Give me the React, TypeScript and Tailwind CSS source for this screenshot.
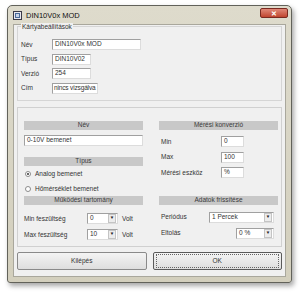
import React from 'react';

const font = { fontFamily: '"Liberation Sans", Arial, sans-serif' };

function Header({ children }: { children: React.ReactNode }) {
  return (
    <div className="h-[9px] bg-[#c8c8c8] flex items-center justify-center text-[6.5px] leading-none text-[#3a3a3a]">
      {children}
    </div>
  );
}

function TextBox({ value, w, tight }: { value: string; w: string; tight?: boolean }) {
  return (
    <div className={`${w} h-[11px] bg-white border border-[#a0a0a0] border-r-[#dcdcdc] border-b-[#dcdcdc] flex items-center ${tight ? 'px-[1px] tracking-[-0.15px]' : 'px-[2px]'} text-[6.5px] leading-none text-[#333] overflow-hidden whitespace-nowrap`}>
      {value}
    </div>
  );
}

function Combo({ value, w }: { value: string; w: string }) {
  return (
    <div className={`${w} h-[11px] bg-white border border-[#a0a0a0] border-r-[#dcdcdc] border-b-[#dcdcdc] flex items-center text-[6.5px] leading-none text-[#333]`}>
      <span className="flex-1 px-[2px] whitespace-nowrap">{value}</span>
      <span className="w-[8px] h-[9px] mr-[1px] bg-[#ececec] border border-[#c4c4c4] flex items-center justify-center text-[4.5px] text-[#222]">▼</span>
    </div>
  );
}

function Radio({ checked, label }: { checked?: boolean; label: string }) {
  return (
    <div className="flex items-center gap-[4px] h-[15px] pl-[1px] text-[6.5px] text-[#333]">
      <span className="w-[6px] h-[6px] rounded-full border border-[#8c8c8c] bg-white flex items-center justify-center">
        {checked && <span className="w-[2px] h-[2px] rounded-full bg-[#333]" />}
      </span>
      {label}
    </div>
  );
}

export default function App() {
  return (
    <div className="w-[302px] h-[292px] bg-white pl-[7px] pt-[5px]" style={font}>
      <div className="w-[285px] h-[278px] rounded-t-[5px] rounded-b-[3px] border border-[#62625a] bg-gradient-to-b from-[#dedbcc] to-[#d3cfbd] shadow-[2px_3px_5px_rgba(0,0,0,0.35)] flex flex-col px-[5px] pb-[5px]">
        {/* title bar */}
        <div className="h-[18px] flex items-start">
          <div className="mt-[5px] w-[9px] h-[9px] border border-[#3a3a48] bg-[#e8e8f0] mr-[4px] flex items-center justify-center">
            <div className="w-[5px] h-[5px] border border-[#4a6a9a] bg-[#c8d4e8]" />
          </div>
          <span className="mt-[5px] text-[7.5px] leading-[9px] text-[#111]">DIN10V0x MOD</span>
          <div className="flex-1" />
          <div className="mt-[2px] -mr-[2px] w-[28px] h-[10px] rounded-[2px] bg-gradient-to-b from-[#e08878] to-[#c0442e] border border-[#7a2a20] flex items-center justify-center text-white text-[7px] font-bold leading-none">
            ✕
          </div>
        </div>
        {/* client */}
        <div className="flex-1 bg-[#f0f0f0] border border-[#a9a79c] flex flex-col px-[3px] pt-[1px]">
          {/* group box */}
          <div className="relative border border-[#d5d5d5] h-[75px] pl-[3px] pt-[12px] flex flex-col gap-[3.5px]">
            <span className="absolute -top-[4px] left-[3px] bg-[#f0f0f0] px-[1px] text-[6.5px] leading-[8px] text-[#333]">Kártyabeállítások</span>
            {[
              ['Név', 'DIN10V0x MOD', 'w-[89px]'],
              ['Típus', 'DIN10V02', 'w-[39px]'],
              ['Verzió', '254', 'w-[39px]'],
              ['Cím', 'nincs vizsgálva', 'w-[46px]'],
            ].map(([l, v, w]) => (
              <div key={l} className="flex items-center h-[11px]">
                <span className="w-[31px] text-[6.5px] text-[#333]">{l}</span>
                <TextBox value={v} w={w} tight={l === 'Cím'} />
              </div>
            ))}
          </div>
          {/* main panel */}
          <div className="mt-[6px] border border-[#d0d0d0] h-[140px] grid grid-cols-[119px_119px] gap-[16px] pl-[6px] pt-[13px]">
            <div className="flex flex-col">
              <Header>Név</Header>
              <div className="mt-[5px]">
                <TextBox value="0-10V bemenet" w="w-full" />
              </div>
              <div className="mt-[11px]">
                <Header>Típus</Header>
              </div>
              <Radio checked label="Analog bemenet" />
              <Radio label="Hőmérséklet bemenet" />
              <Header>Működési tartomány</Header>
              <div className="mt-[8px] flex flex-col gap-[5px]">
                {[
                  ['Min feszültség', '0'],
                  ['Max feszültség', '10'],
                ].map(([l, v]) => (
                  <div key={l} className="flex items-center h-[11px] text-[6.5px] text-[#333]">
                    <span className="w-[63px]">{l}</span>
                    <Combo value={v} w="w-[31px]" />
                    <span className="ml-[4px]">Volt</span>
                  </div>
                ))}
              </div>
            </div>
            <div className="flex flex-col">
              <Header>Mérési konverzió</Header>
              <div className="mt-[6px] flex flex-col gap-[4.5px]">
                {[
                  ['Min', '0'],
                  ['Max', '100'],
                  ['Mérési eszköz', '%'],
                ].map(([l, v]) => (
                  <div key={l} className="flex items-center h-[11px] text-[6.5px] text-[#333]">
                    <span className="w-[62px] pl-[2px]">{l}</span>
                    <TextBox value={v} w="w-[23px]" />
                  </div>
                ))}
              </div>
              <div className="mt-[18px]">
                <Header>Adatok frissítése</Header>
              </div>
              <div className="mt-[7px] flex flex-col gap-[6px]">
                <div className="flex items-center h-[10px] text-[6.5px] text-[#333]">
                  <span className="w-[50px] pl-[2px]">Periódus</span>
                  <Combo value="1 Percek" w="w-[65px]" />
                </div>
                <div className="flex items-center h-[10px] text-[6.5px] text-[#333]">
                  <span className="w-[77px] pl-[2px]">Eltolás</span>
                  <Combo value="0 %" w="w-[38px]" />
                </div>
              </div>
            </div>
          </div>
          {/* buttons */}
          <div className="mt-[5px] flex gap-[6px]">
            <div className="flex-1 h-[18px] border border-[#8a8a8a] rounded-[2px] bg-gradient-to-b from-[#f4f4f4] to-[#dedede] flex items-center justify-center text-[6.5px] text-[#333]">
              Kilépés
            </div>
            <div className="flex-1 h-[18px] border border-[#5a5a5a] rounded-[2px] bg-gradient-to-b from-[#f4f4f4] to-[#dedede] flex items-center justify-center text-[6.5px] text-[#333]">
              <div className="w-[calc(100%-4px)] h-[14px] border border-dotted border-[#666] flex items-center justify-center">OK</div>
            </div>
          </div>
        </div>
      </div>
    </div>
  );
}
